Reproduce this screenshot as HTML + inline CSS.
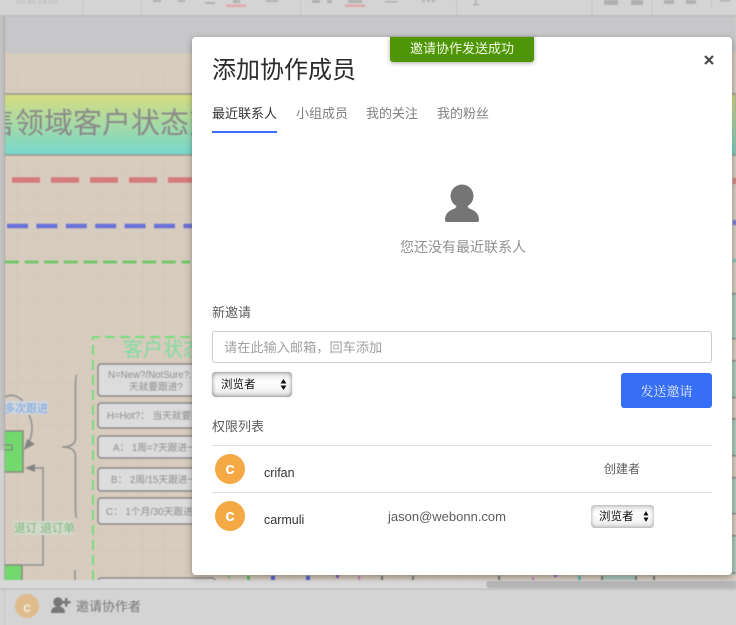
<!DOCTYPE html>
<html lang="zh"><head><meta charset="utf-8"><title>添加协作成员</title>
<style>
html,body{margin:0;padding:0;width:736px;height:625px;overflow:hidden;background:#d4d4d4}
body{position:relative;font-family:"Liberation Sans","Noto Sans CJK SC",sans-serif;filter:blur(.3px)}
.a{position:absolute;white-space:nowrap}
#bg{position:absolute;left:0;top:0;filter:blur(.5px)}
#modal{position:absolute;left:192px;top:37px;width:540px;height:538px;background:#fff;border-radius:4px;box-shadow:0 2px 7px rgba(0,0,0,.35)}
.t{font-size:13px;line-height:20px;color:#5c5c5c}
.sel{position:absolute;border-radius:4px;background:linear-gradient(#e6e6e6,#fff 40%,#f6f6f6 70%,#e2e2e2);font-size:11.5px;color:#111}
.sel span{position:absolute;white-space:nowrap}
</style></head><body>
<svg id="bg" width="736" height="625" xmlns="http://www.w3.org/2000/svg" font-family="Liberation Sans, Noto Sans CJK SC, sans-serif">
<defs>
<pattern id="g" x="17" y="68" width="21" height="21" patternUnits="userSpaceOnUse"><path d="M0 21V0H21" fill="none" stroke="#d1c5b7" stroke-width="1"/></pattern>
<linearGradient id="b" x1="0" y1="0" x2="0" y2="1"><stop offset="0" stop-color="#d8dd80"/><stop offset="1" stop-color="#74d8cd"/></linearGradient>
<clipPath id="c"><rect x="5" y="53" width="731" height="527"/></clipPath>
</defs>
<rect width="736" height="625" fill="#d4d4d4"/>
<rect y="16" width="736" height="38" fill="#c7c7c9"/>
<rect x="5" y="53" width="731" height="527" fill="#d8ccbe"/>
<rect x="5" y="68" width="731" height="512" fill="url(#g)"/>
<g clip-path="url(#c)">
<rect x="0" y="94" width="736" height="61" fill="url(#b)" stroke="#9a9a90" stroke-width="1.600"/>
<text x="-14" y="133" font-size="29" fill="#8a8a8a" font-family="Noto Sans CJK SC, sans-serif">售领域客户状态变</text>
<path d="M12 180H192" stroke="#d67b7c" stroke-width="5.500" stroke-dasharray="28 11"/>
<path d="M7 226H192" stroke="#6b72d8" stroke-width="4.500" stroke-dasharray="21 8.400"/>
<path d="M5 262H190" stroke="#72c76c" stroke-width="3" stroke-dasharray="14 5.600"/>
<rect x="733" y="178" width="3" height="6" fill="#d67b7c"/>
<rect x="733" y="220" width="3" height="5" fill="#6b72d8"/>
<rect x="733" y="259" width="3" height="3" fill="#6cc4c0"/>
<rect x="732" y="293" width="4" height="282" fill="#a9c9bb"/>
<g fill="#d9cdbf"><rect x="732" y="338" width="4" height="22"/><rect x="732" y="397" width="4" height="21"/><rect x="732" y="455" width="4" height="22"/><rect x="732" y="513" width="4" height="22"/></g>
<g fill="#8a8a84"><rect x="732" y="293" width="4" height="1.500"/><rect x="732" y="338" width="4" height="1.500"/><rect x="732" y="360" width="4" height="1.500"/><rect x="732" y="397" width="4" height="1.500"/><rect x="732" y="418" width="4" height="1.500"/><rect x="732" y="455" width="4" height="1.500"/><rect x="732" y="477" width="4" height="1.500"/><rect x="732" y="513" width="4" height="1.500"/><rect x="732" y="535" width="4" height="1.500"/><rect x="732" y="572" width="4" height="1.500"/></g>
<path d="M93 580V337H200" fill="none" stroke="#74dd78" stroke-width="2" stroke-dasharray="10 5"/>
<text x="123" y="356" font-size="20" fill="#7fdc9d" font-family="Noto Sans CJK SC, sans-serif">客户状态</text>
<g fill="#dcdcdc" stroke="#8a8a8a" stroke-width="1.500">
<rect x="98" y="364" width="110" height="32" rx="3"/><rect x="98" y="403" width="110" height="25" rx="3"/><rect x="98" y="436" width="110" height="22" rx="3"/><rect x="98" y="468" width="110" height="23" rx="3"/><rect x="98" y="498" width="110" height="26" rx="3"/><rect x="98" y="578" width="117" height="20" rx="3"/>
</g>
<g font-size="9.700" fill="#8e8e8e">
<text x="108" y="378">N=New?/NotSure?:</text><text x="129" y="390">天就要跟进?</text>
<text x="107" y="419">H=Hot?： 当天就要跟进</text>
<text x="113" y="451">A： 1周=7天跟进一次</text>
<text x="111" y="483">B： 2周/15天跟进一次</text>
<text x="106" y="515">C： 1个月/30天跟进一次</text>
</g>
<path d="M77 375Q75.500 376 75.500 386V438Q75.500 447 62 447Q75.500 447 75.500 456V508Q75.500 518 77 518" fill="none" stroke="#8f8f8f" stroke-width="1.500"/>
<path d="M75 570V580" fill="none" stroke="#8f8f8f" stroke-width="1.500"/>
<rect x="0" y="431" width="23" height="41" fill="#73d96e" stroke="#858a80" stroke-width="1.500"/>
<path d="M5 445H12V450H5" fill="none" stroke="#7a7a7a" stroke-width="1"/>
<rect x="0" y="565" width="22" height="20" fill="#73d96e" stroke="#858a80" stroke-width="1.500"/>
<path d="M23 565H43V468H30" fill="none" stroke="#8f8f8f" stroke-width="1.500"/>
<path d="M25 468L35 464V472Z" fill="#858585"/>
<path d="M5 397Q14 392 23 401M29 415Q36 430 27 446" fill="none" stroke="#8f8f8f" stroke-width="1.500"/>
<path d="M24 450L27 439L35 444Z" fill="#858585"/>
<rect x="5" y="401" width="43" height="13" fill="#cfd6de"/>
<text x="4" y="412" font-size="11" fill="#7ba5e0">多次跟进</text>
<rect x="14" y="521" width="59" height="14" fill="#d3dacb"/>
<text x="14" y="532" font-size="11.500" fill="#7db87f">退订 退订单</text>
<g>
<rect x="228" y="576" width="2" height="2" fill="#6fd070"/><rect x="247" y="576" width="3" height="4" fill="#62bb60"/><rect x="271" y="576" width="4" height="4" fill="#5560d0"/><rect x="306" y="576" width="4" height="4" fill="#5560d0"/><rect x="336" y="575" width="3" height="3" fill="#8a60cc"/><rect x="358" y="576" width="2" height="4" fill="#cc7ec8"/><rect x="381" y="576" width="2" height="4" fill="#777"/><rect x="412" y="576" width="2" height="4" fill="#777"/><rect x="498" y="576" width="2" height="4" fill="#777"/><rect x="532" y="577" width="2" height="3" fill="#cc7ec8"/><rect x="554" y="575" width="3" height="2" fill="#8a60cc"/><rect x="578" y="576" width="3" height="4" fill="#5cb5b0"/><rect x="602" y="576" width="34" height="4" fill="#a9c9bb"/><rect x="601" y="576" width="2" height="4" fill="#777"/><rect x="635" y="576" width="2" height="4" fill="#777"/><rect x="653" y="576" width="2" height="4" fill="#777"/>
</g>
</g>
<rect y="15" width="736" height="1.500" fill="#bcbcbc"/>
<g fill="#c4c4c4">
<rect x="82.500" width="1" height="15"/><rect x="141" width="1" height="15"/><rect x="300" width="1" height="15"/><rect x="456" width="1" height="15"/><rect x="591.500" width="1" height="15"/><rect x="651.500" width="1" height="15"/><rect x="711" width="1" height="8"/>
</g>
<text x="15" y="3" font-size="11" fill="#bcbcbc">微软雅黑</text>
<g fill="#b0b0b0"><rect x="153" width="8" height="2"/><rect x="178" width="7" height="2"/><rect x="205" y="2" width="10" height="2"/><rect x="233" width="7" height="3"/><rect x="266" y="0" width="12" height="2"/><rect x="312" width="8" height="3"/><rect x="327" width="5" height="3"/><rect x="348" width="14" height="3"/><rect x="385" y="1" width="13" height="1.500"/><rect x="422" width="3" height="2"/><rect x="427" width="3" height="2"/><rect x="432" width="3" height="2"/><rect x="473" y="4" width="6" height="1.500"/><rect x="604" width="14" height="5"/><rect x="631" width="12" height="5"/><rect x="664" width="10" height="4"/><rect x="686" width="10" height="4"/><rect x="720" width="10" height="1.500"/><rect x="475" width="1.500" height="5"/></g>
<rect x="226" y="4.500" width="20" height="2.500" fill="#dfa8a8"/><rect x="345" y="4.500" width="20" height="2.500" fill="#dfa8a8"/>
<rect x="0" y="16" width="4" height="434" fill="#bfbfbf"/>
<rect x="0" y="450" width="4" height="130" fill="#d2d2d2"/>
<rect x="4" y="16" width="1" height="564" fill="#a9a9a9"/>
<rect x="0" y="580" width="736" height="9" fill="#d8d8d8"/>
<rect x="486" y="581" width="260" height="7" rx="3.500" fill="#b6b6b6"/>
<rect y="588.500" width="736" height="1.200" fill="#b9b9b9"/>
<rect x="4" y="589" width="1" height="36" fill="#c4c4c4"/>
<circle cx="27" cy="606" r="12" fill="#dfbc8b"/>
<text x="27" y="612" text-anchor="middle" font-size="14" font-weight="bold" fill="#f1ece2">c</text>
<circle cx="58" cy="602" r="4.700" fill="#777"/>
<path d="M51 613q0-6.500 7-6.500t7 6.500z" fill="#777"/>
<path d="M65 598h2.500v3h3v2.500h-3v3H65v-3h-3V601h3z" fill="#777"/>
<text x="76" y="611" font-size="13" fill="#777">邀请协作者</text>
</svg>

<div id="modal"></div>
<div class="a" style="left:390px;top:37px;width:144px;height:25px;background:#4f9606;border-radius:0 0 3px 3px;box-shadow:0 1px 4px rgba(0,0,0,.35);color:#f2fae6;font-size:13px;line-height:23px;text-align:center">邀请协作发送成功</div>
<svg class="a" style="left:703px;top:54px" width="12" height="12"><path d="M2 2L10 10M10 2L2 10" stroke="#4a4a4a" stroke-width="2.200"/></svg>
<div class="a" style="left:212px;top:54px;font-size:24px;line-height:34px;color:#2a2a2a">添加协作成员</div>
<div class="a t" style="left:212px;top:104px;color:#333">最近联系人</div>
<div class="a" style="left:212px;top:131px;width:65px;height:2px;background:#3b6ef5"></div>
<div class="a t" style="left:296px;top:104px;color:#808080">小组成员</div>
<div class="a t" style="left:366px;top:104px;color:#808080">我的关注</div>
<div class="a t" style="left:437px;top:104px;color:#808080">我的粉丝</div>
<svg class="a" style="left:445px;top:184px" width="34" height="38"><circle cx="17" cy="12" r="11.500" fill="#757575"/><path d="M0 36C0 29 5 26 10 24.500L13 20H21L24 24.500C29 26 34 29 34 36Q34 38 32 38H2Q0 38 0 36Z" fill="#757575"/></svg>
<div class="a" style="left:400px;top:237px;font-size:14px;line-height:20px;color:#909090">您还没有最近联系人</div>
<div class="a t" style="left:212px;top:303px">新邀请</div>
<div class="a" style="left:212px;top:331px;width:498px;height:30px;border:1px solid #ccc;border-radius:3px;background:#fff"></div>
<div class="a" style="left:224px;top:338px;font-size:13.200px;line-height:20px;color:#a0a0a0">请在此输入邮箱，回车添加</div>
<div class="sel" style="left:212px;top:372px;width:80px;height:25px;box-shadow:inset 0 0 5px rgba(0,0,0,.5),0 0 1px rgba(0,0,0,.3)"><span style="left:9px;top:5px;line-height:16px">浏览者</span>
<svg style="position:absolute;left:68px;top:7px" width="7" height="11"><path d="M3.500 0L6.500 4.500H.5zM3.500 11L.5 6.500H6.500z" fill="#111"/></svg></div>
<div class="a" style="left:621px;top:373px;width:91px;height:35px;background:#366ff6;border-radius:3px;color:#e6edff;font-size:13px;line-height:35px;text-align:center;font-family:'Noto Serif CJK SC',serif">发送邀请</div>
<div class="a t" style="left:212px;top:417px">权限列表</div>
<div class="a" style="left:212px;top:445px;width:500px;height:1px;background:#ddd"></div>
<div class="a" style="left:212px;top:492px;width:500px;height:1px;background:#ddd"></div>
<div class="a" style="left:215px;top:454px;width:30px;height:30px;border-radius:50%;background:#f5a945;color:#fff;font-size:17px;font-weight:bold;line-height:30px;text-align:center">c</div>
<div class="a" style="left:215px;top:501px;width:30px;height:30px;border-radius:50%;background:#f5a945;color:#fff;font-size:17px;font-weight:bold;line-height:30px;text-align:center">c</div>
<div class="a" style="left:264px;top:463px;font-size:12.500px;line-height:20px;color:#333">crifan</div>
<div class="a" style="left:264px;top:510px;font-size:12.500px;line-height:20px;color:#333">carmuli</div>
<div class="a" style="left:388px;top:507px;font-size:13px;line-height:20px;color:#5c5c5c">jason@webonn.com</div>
<div class="a t" style="left:604px;top:459px;font-size:12px">创建者</div>
<div class="sel" style="left:591px;top:505px;width:63px;height:23px;box-shadow:inset 0 0 4px rgba(0,0,0,.35)"><span style="left:8px;top:4px;line-height:16px">浏览者</span>
<svg style="position:absolute;left:52px;top:6px" width="6" height="11"><path d="M3 0L5.500 4.500H.5zM3 11L.5 6.500H5.500z" fill="#111"/></svg></div>
</body></html>
